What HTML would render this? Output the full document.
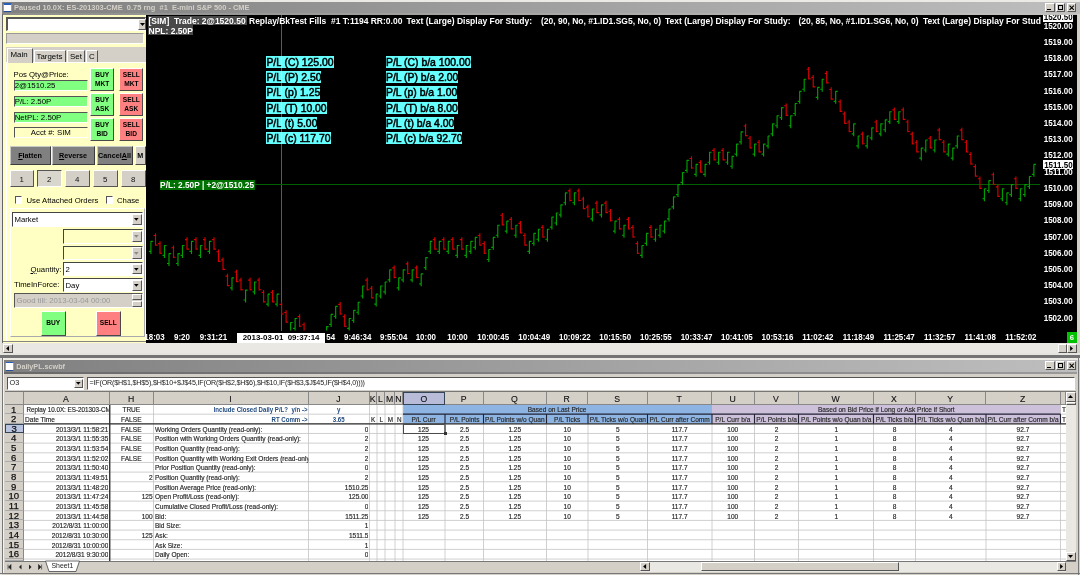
<!DOCTYPE html><html><head><meta charset="utf-8"><title>DailyPL</title><style>
*{box-sizing:border-box;margin:0;padding:0}
html,body{width:1080px;height:575px;overflow:hidden;background:#d4d0c8}
body{position:relative;will-change:transform;font-family:"Liberation Sans",sans-serif;font-size:7px;color:#000}
.a{position:absolute;white-space:nowrap;overflow:hidden}
.t{position:absolute;white-space:nowrap;line-height:1}
.tb{background:linear-gradient(to right,#808080,#bebebe)}
.ttl{color:#d4d0c8;font-weight:bold;font-size:7.45px}
.ylw{background:#ffffc4}
.btn{position:absolute;text-align:center;font-weight:bold;font-size:7.2px;line-height:7.6px;border-top:1px solid #fff;border-left:1px solid #fff;border-right:1.6px solid #4a4a4a;border-bottom:1.6px solid #4a4a4a}
.g{background:#80ff80}
.r{background:#ff8080}
.sunk{border-top:1.3px solid #555;border-left:1.3px solid #555;border-right:1px solid #fff;border-bottom:1px solid #fff}
.rais{border-top:1px solid #fff;border-left:1px solid #fff;border-right:1.3px solid #555;border-bottom:1.3px solid #555}
.cb{position:absolute;background:#d4d0c8}
.ct{position:absolute;color:#fff;font-weight:bold;font-size:8.5px;white-space:nowrap;line-height:1}
.cy{position:absolute;background:#6ff;color:#000;font-size:10.4px;line-height:13.2px;height:12.2px;overflow:hidden;white-space:nowrap;-webkit-text-stroke:0.5px #000}
.pl{position:absolute;color:#fff;font-weight:bold;font-size:8px;white-space:nowrap;line-height:1;right:7.4px;text-align:right;transform:scaleY(1.14)}
.tl{position:absolute;color:#fff;font-weight:bold;font-size:7.95px;white-space:nowrap;line-height:1;top:333.5px;transform:scaleY(1.14)}
.c{position:absolute;white-space:nowrap;overflow:hidden;font-size:7.05px;line-height:9.66px;height:9.66px;color:#222;-webkit-text-stroke:0.18px #333}
.hd{position:absolute;background:#d4d0c8;text-align:center;font-size:8.7px;line-height:15.4px;color:#111;-webkit-text-stroke:0.12px #111;border-right:1px solid #888;border-bottom:1px solid #888}
.hd span{position:absolute;left:50%;top:0;transform:translateX(-50%)}
.rh{position:absolute;background:#d4d0c8;text-align:center;font-size:9.6px;line-height:10px;color:#111;-webkit-text-stroke:0.25px #111;border-right:1px solid #888;border-bottom:1px solid #aaa;overflow:hidden}
.bl{color:#1f497d;font-weight:bold;font-size:6.55px;-webkit-text-stroke:0}
</style></head><body>
<div class="a " style="left:0px;top:0px;width:1080px;height:2px;background:#eceae4"></div>
<div class="a tb" style="left:0px;top:1.9px;width:1080px;height:11.1px;"></div>
<div class="a " style="left:2.5px;top:3px;width:9.5px;height:9px;background:#fff;border-top:2px solid #2a5fb8;border-bottom:1px solid #2a4f98;border-left:0.6px solid #8aa;border-right:0.6px solid #8aa"></div>
<div class="t ttl" style="left:14px;top:4.2px;white-space:pre">Paused 10.0X: ES-201303-CME  0.75 rng  #1  E-mini S&amp;P 500 - CME</div>
<div class="a rais" style="left:1045.2px;top:3px;width:9.4px;height:8.7px;background:#d4d0c8"></div>
<div class="a rais" style="left:1055.6px;top:3px;width:9.4px;height:8.7px;background:#d4d0c8"></div>
<div class="a rais" style="left:1067px;top:3px;width:9.4px;height:8.7px;background:#d4d0c8"></div>
<div class="a " style="left:1047.2px;top:8.8px;width:4.2px;height:1.3px;background:#000"></div>
<div class="a " style="left:1057.8px;top:4.6px;width:5.4px;height:5.4px;border:0.9px solid #000;border-top:1.6px solid #000"></div>
<svg class="a" style="left:1069.2px;top:4.5px;width:5.6px;height:5.6px" viewBox="0 0 6 6"><path d="M0.6 0.6L5.2 5.2M5.2 0.6L0.6 5.2" stroke="#000" stroke-width="1.2"/></svg>
<div class="a " style="left:0px;top:12.9px;width:1080px;height:2.2px;background:linear-gradient(to right,#8c8c8c,#c4c2be)"></div>
<div class="a " style="left:0px;top:2px;width:1.6px;height:354px;background:#e4e2dc"></div>
<div class="a " style="left:1.6px;top:14px;width:1.0px;height:329px;background:#666"></div>
<div class="a " style="left:1076.8px;top:14px;width:3.2px;height:342px;background:#d4d0c8"></div>
<div class="a ylw" style="left:2.6px;top:15.3px;width:143.4px;height:328.0px;"></div>
<div class="a " style="left:2.6px;top:340.6px;width:143.4px;height:1.2px;background:#858585"></div>
<div class="a sunk" style="left:5.5px;top:17px;width:140.5px;height:13.5px;background:#fff;border-left:2px solid #555;border-top:2px solid #555"></div>
<div class="a rais" style="left:137.5px;top:19px;width:8.5px;height:10.5px;background:#d4d0c8"></div>
<svg class="a" style="left:139.5px;top:22.5px;width:5px;height:3px" viewBox="0 0 5 3"><path d="M0 0H5L2.5 3Z" fill="#000"/></svg>
<div class="a " style="left:5.5px;top:33px;width:138.0px;height:10.5px;background:#d4d0c8;border-top:1px solid #999;border-left:1px solid #999;border-bottom:1px solid #fff;border-right:1px solid #fff"></div>
<div class="a " style="left:5.5px;top:47px;width:140.5px;height:15px;background:#d4d0c8"></div>
<div class="a " style="left:7px;top:47.5px;width:25.5px;height:15.5px;background:#d4d0c8;border-left:1px solid #fff;border-top:1px solid #fff;border-right:1.4px solid #555"></div>
<div class="t " style="left:10.5px;top:50.5px;font-size:7.9px">Main</div>
<div class="a " style="left:33.5px;top:49.5px;width:32.0px;height:12.0px;background:#d4d0c8;border-left:1px solid #fff;border-top:1px solid #fff;border-right:1.4px solid #555"></div>
<div class="t " style="left:36.5px;top:52.5px;font-size:7.9px">Targets</div>
<div class="a " style="left:66.5px;top:49.5px;width:18.0px;height:12.0px;background:#d4d0c8;border-left:1px solid #fff;border-top:1px solid #fff;border-right:1.4px solid #555"></div>
<div class="t " style="left:70px;top:52.5px;font-size:7.9px">Set</div>
<div class="a " style="left:85.5px;top:49.5px;width:12.5px;height:12.0px;background:#d4d0c8;border-left:1px solid #fff;border-top:1px solid #fff;border-right:1.4px solid #555"></div>
<div class="t " style="left:89px;top:52.5px;font-size:7.9px">C</div>
<div class="a " style="left:5.5px;top:61.5px;width:1.5px;height:279.1px;background:#fff"></div>
<div class="a " style="left:32.5px;top:61.5px;width:113.5px;height:1.0px;background:#fff"></div>
<div class="t " style="left:13.5px;top:71px;font-size:7.75px">Pos Qty@Price:</div>
<div class="a g sunk" style="left:13.7px;top:80px;width:74.3px;height:11px;font-size:7.85px;line-height:9.7px;padding-left:0;">2@1510.25</div>
<div class="a g sunk" style="left:13.7px;top:96px;width:74.3px;height:10.5px;font-size:7.85px;line-height:9.2px;padding-left:0;">P/L: 2.50P</div>
<div class="a g sunk" style="left:13.7px;top:111.5px;width:74.3px;height:11.0px;font-size:7.85px;line-height:9.7px;padding-left:0;">NetPL: 2.50P</div>
<div class="a ylw sunk" style="left:13.7px;top:127px;width:74.3px;height:11px;font-size:7.85px;line-height:9.7px;text-align:center;">Acct #: SIM</div>
<div class="btn g" style="left:90.2px;top:67.9px;width:24px;height:23.3px;padding-top:2.6px;font-size:6.6px;line-height:8.9px">BUY<br>MKT</div>
<div class="btn r" style="left:119.3px;top:67.9px;width:24px;height:23.3px;padding-top:2.6px;font-size:6.6px;line-height:8.9px">SELL<br>MKT</div>
<div class="btn g" style="left:90.2px;top:92.9px;width:24px;height:23.3px;padding-top:2.6px;font-size:6.6px;line-height:8.9px">BUY<br>ASK</div>
<div class="btn r" style="left:119.3px;top:92.9px;width:24px;height:23.3px;padding-top:2.6px;font-size:6.6px;line-height:8.9px">SELL<br>ASK</div>
<div class="btn g" style="left:90.2px;top:117.9px;width:24px;height:23.3px;padding-top:2.6px;font-size:6.6px;line-height:8.9px">BUY<br>BID</div>
<div class="btn r" style="left:119.3px;top:117.9px;width:24px;height:23.3px;padding-top:2.6px;font-size:6.6px;line-height:8.9px">SELL<br>BID</div>
<div class="btn" style="left:9.5px;top:146px;width:41.0px;height:18.5px;background:#808080;line-height:18px;font-size:7.2px;border-top:0.8px solid #c8c8c8;border-left:0.8px solid #c8c8c8;border-right:1.6px solid #3c3c3c;border-bottom:1.6px solid #3c3c3c"><u>F</u>latten</div>
<div class="btn" style="left:51.5px;top:146px;width:43.0px;height:18.5px;background:#808080;line-height:18px;font-size:7.2px;border-top:0.8px solid #c8c8c8;border-left:0.8px solid #c8c8c8;border-right:1.6px solid #3c3c3c;border-bottom:1.6px solid #3c3c3c"><u>R</u>everse</div>
<div class="btn" style="left:96.5px;top:146px;width:36.0px;height:18.5px;background:#808080;line-height:18px;font-size:7.2px;border-top:0.8px solid #c8c8c8;border-left:0.8px solid #c8c8c8;border-right:1.6px solid #3c3c3c;border-bottom:1.6px solid #3c3c3c">Cancel<u>A</u>ll</div>
<div class="btn" style="left:134.5px;top:146px;width:11.5px;height:18.5px;background:#d4d0c8;line-height:17.6px;font-size:7.2px">M</div>
<div class="a rais" style="left:9.5px;top:170px;width:24.5px;height:16.5px;background:#d4d0c8;text-align:center;line-height:17.2px;font-size:7.9px;color:#111">1</div>
<div class="a" style="left:37px;top:170px;width:24.5px;height:16.5px;background:#d9d6ce;border:1.3px solid #555;border-right:1px solid #fff;border-bottom:1px solid #fff;text-align:center;line-height:17.4px;font-size:7.9px;color:#111">2</div>
<div class="a rais" style="left:65px;top:170px;width:24.5px;height:16.5px;background:#d4d0c8;text-align:center;line-height:17.2px;font-size:7.9px;color:#111">4</div>
<div class="a rais" style="left:93px;top:170px;width:24.5px;height:16.5px;background:#d4d0c8;text-align:center;line-height:17.2px;font-size:7.9px;color:#111">5</div>
<div class="a rais" style="left:121px;top:170px;width:24.5px;height:16.5px;background:#d4d0c8;text-align:center;line-height:17.2px;font-size:7.9px;color:#111">8</div>
<div class="a sunk" style="left:15px;top:196px;width:7.3px;height:7.8px;background:#fff"></div>
<div class="t " style="left:26.5px;top:197px;font-size:7.75px">Use Attached Orders</div>
<div class="a sunk" style="left:106px;top:196px;width:7.3px;height:7.8px;background:#fff"></div>
<div class="t " style="left:117px;top:197px;font-size:7.75px">Chase</div>
<div class="a " style="left:10px;top:208px;width:135px;height:128.5px;border:1px solid #fff;border-right:1px solid #aaa;border-bottom:1px solid #aaa"></div>
<div class="a sunk" style="left:12px;top:212px;width:130.5px;height:14.5px;background:#fff;font-size:7.75px;line-height:14.3px;padding-left:1.5px;border-left:1.6px solid #444;border-top:1.6px solid #444">Market</div>
<div class="a rais" style="left:131.5px;top:213.6px;width:10.0px;height:11.9px;background:#d4d0c8"></div>
<svg class="a" style="left:134.2px;top:218.25px;width:4.6px;height:2.8px" viewBox="0 0 5 3"><path d="M0 0H5L2.5 3Z" fill="#000"/></svg>
<div class="a sunk" style="left:63px;top:229px;width:79.5px;height:14.5px;background:#ffffc4;font-size:7.75px;line-height:14.3px;padding-left:1.5px;border-left:1.6px solid #444;border-top:1.6px solid #444"></div>
<div class="a rais" style="left:131.5px;top:230.6px;width:10.0px;height:11.9px;background:#d4d0c8"></div>
<svg class="a" style="left:134.2px;top:235.25px;width:4.6px;height:2.8px" viewBox="0 0 5 3"><path d="M0 0H5L2.5 3Z" fill="#888"/></svg>
<div class="a sunk" style="left:63px;top:245.5px;width:79.5px;height:14.5px;background:#ffffc4;font-size:7.75px;line-height:14.3px;padding-left:1.5px;border-left:1.6px solid #444;border-top:1.6px solid #444"></div>
<div class="a rais" style="left:131.5px;top:247.1px;width:10.0px;height:11.9px;background:#d4d0c8"></div>
<svg class="a" style="left:134.2px;top:251.75px;width:4.6px;height:2.8px" viewBox="0 0 5 3"><path d="M0 0H5L2.5 3Z" fill="#888"/></svg>
<div class="a sunk" style="left:63px;top:262px;width:79.5px;height:13.5px;background:#fff;font-size:7.75px;line-height:13.3px;padding-left:1.5px;border-left:1.6px solid #444;border-top:1.6px solid #444">2</div>
<div class="a rais" style="left:131.5px;top:263.6px;width:10.0px;height:10.9px;background:#d4d0c8"></div>
<svg class="a" style="left:134.2px;top:267.75px;width:4.6px;height:2.8px" viewBox="0 0 5 3"><path d="M0 0H5L2.5 3Z" fill="#000"/></svg>
<div class="a sunk" style="left:63px;top:278px;width:79.5px;height:14px;background:#fff;font-size:7.75px;line-height:13.8px;padding-left:1.5px;border-left:1.6px solid #444;border-top:1.6px solid #444">Day</div>
<div class="a rais" style="left:131.5px;top:279.6px;width:10.0px;height:11.4px;background:#d4d0c8"></div>
<svg class="a" style="left:134.2px;top:284.0px;width:4.6px;height:2.8px" viewBox="0 0 5 3"><path d="M0 0H5L2.5 3Z" fill="#000"/></svg>
<div class="t" style="left:30.5px;top:265.5px;font-size:7.75px"><u>Q</u>uantity:</div>
<div class="t " style="left:14px;top:281px;font-size:7.75px">TimeInForce:</div>
<div class="a sunk" style="left:14px;top:292.5px;width:128.5px;height:15.0px;background:#d4d0c8;color:#999;font-size:7.75px;line-height:13px;padding-left:1.5px;border-left:1.6px solid #555;border-top:1.6px solid #555">Good till: 2013-03-04 00:00</div>
<div class="a rais" style="left:131.5px;top:294px;width:10.0px;height:6.3px;background:#d4d0c8"></div>
<div class="a rais" style="left:131.5px;top:300.5px;width:10.0px;height:6.3px;background:#d4d0c8"></div>
<div class="btn g" style="left:41px;top:311px;width:24.5px;height:24.5px;line-height:22.4px;font-size:6.6px">BUY</div>
<div class="btn r" style="left:96px;top:311px;width:24.5px;height:24.5px;line-height:22.4px;font-size:6.6px">SELL</div>
<div class="a " style="left:2.6px;top:343.3px;width:1074.4px;height:9.7px;background:#e9e8e2"></div>
<div class="a rais" style="left:2.8px;top:343.6px;width:9.8px;height:9.2px;background:#d4d0c8"></div>
<svg class="a" style="left:6px;top:345.6px;width:3.2px;height:5px" viewBox="0 0 3 5"><path d="M3 0V5L0 2.5Z" fill="#000"/></svg>
<div class="a rais" style="left:1067px;top:343.6px;width:9.6px;height:9.2px;background:#d4d0c8"></div>
<svg class="a" style="left:1070px;top:345.6px;width:3.2px;height:5px" viewBox="0 0 3 5"><path d="M0 0V5L3 2.5Z" fill="#000"/></svg>
<div class="a rais" style="left:1057.5px;top:343.6px;width:9.5px;height:9.2px;background:#d4d0c8"></div>
<div class="a " style="left:0px;top:352.6px;width:1080px;height:2.6px;background:#e6e4de"></div>
<div class="a " style="left:0px;top:355.2px;width:1080px;height:2.6px;background:#747474"></div>
<div class="a " style="left:0px;top:357.8px;width:1080px;height:2.2px;background:#eceae4"></div>
<div class="a " style="left:146px;top:15px;width:930.8px;height:328.3px;background:#000"></div>
<div class="a " style="left:281px;top:15px;width:1.3px;height:316px;background:#5a5a5a"></div>
<div class="a " style="left:254px;top:183.7px;width:786px;height:1.2px;background:#006000"></div>
<svg class="a" style="left:0;top:0;width:1080px;height:345px" viewBox="0 0 1080 345">
<path d="M150.9 241.3V253.9M150.6 241.4h2.3M151.2 251.4h-2.3M164.5 245.4V257.9M164.2 245.5h2.3M164.8 255.4h-2.3M169.0 253.5V266.0M168.7 253.6h2.3M169.3 263.5h-2.3M178.0 253.5V266.0M177.7 253.6h2.3M178.3 263.5h-2.3M182.5 245.4V257.9M182.2 245.5h2.3M182.8 255.4h-2.3M191.5 241.3V253.9M191.2 241.4h2.3M191.8 251.4h-2.3M200.5 245.4V257.9M200.2 245.5h2.3M200.8 255.4h-2.3M209.5 241.3V253.9M209.2 241.4h2.3M209.8 251.4h-2.3M232.0 277.8V290.4M231.7 277.9h2.3M232.3 287.9h-2.3M245.6 290.0V302.5M245.3 290.1h2.3M245.9 300.0h-2.3M254.6 281.9V294.4M254.3 282.0h2.3M254.9 291.9h-2.3M268.1 294.0V306.6M267.8 294.1h2.3M268.4 304.1h-2.3M277.1 294.0V306.6M276.8 294.1h2.3M277.4 304.1h-2.3M290.6 322.4V330.5M290.3 322.5h2.3M295.1 318.4V330.4M294.8 318.5h2.3M295.4 328.4h-2.3M326.6 326.5V330.5M326.3 326.6h2.3M331.1 314.3V326.9M330.8 314.4h2.3M331.4 324.4h-2.3M335.7 306.2V318.8M335.4 306.3h2.3M336.0 316.3h-2.3M349.2 318.4V330.4M348.9 318.5h2.3M349.5 328.4h-2.3M353.7 310.2V322.8M353.4 310.3h2.3M354.0 320.3h-2.3M358.2 302.1V314.7M357.9 302.2h2.3M358.5 312.2h-2.3M362.7 285.9V298.5M362.4 286.0h2.3M363.0 296.0h-2.3M376.2 294.0V306.6M375.9 294.1h2.3M376.5 304.1h-2.3M380.7 285.9V298.5M380.4 286.0h2.3M381.0 296.0h-2.3M385.2 281.9V294.4M384.9 282.0h2.3M385.5 291.9h-2.3M389.7 269.7V282.3M389.4 269.8h2.3M390.0 279.8h-2.3M398.7 277.8V290.4M398.4 277.9h2.3M399.0 287.9h-2.3M403.2 269.7V282.3M402.9 269.8h2.3M403.5 279.8h-2.3M412.2 269.7V282.3M411.9 269.8h2.3M412.5 279.8h-2.3M421.2 273.8V286.3M420.9 273.9h2.3M421.6 283.8h-2.3M425.8 257.5V270.1M425.5 257.6h2.3M426.1 267.6h-2.3M430.3 241.3V253.9M430.0 241.4h2.3M430.6 251.4h-2.3M439.3 241.3V253.9M439.0 241.4h2.3M439.6 251.4h-2.3M448.3 241.3V253.9M448.0 241.4h2.3M448.6 251.4h-2.3M457.3 245.4V257.9M457.0 245.5h2.3M457.6 255.4h-2.3M466.3 245.4V257.9M466.0 245.5h2.3M466.6 255.4h-2.3M470.8 241.3V253.9M470.5 241.4h2.3M471.1 251.4h-2.3M475.3 237.3V249.8M475.0 237.4h2.3M475.6 247.3h-2.3M488.8 249.4V262.0M488.5 249.5h2.3M489.1 259.5h-2.3M493.3 237.3V249.8M493.0 237.4h2.3M493.6 247.3h-2.3M497.8 225.1V237.7M497.5 225.2h2.3M498.1 235.2h-2.3M506.8 221.0V233.6M506.5 221.1h2.3M507.1 231.1h-2.3M515.9 225.1V237.7M515.6 225.2h2.3M516.2 235.2h-2.3M529.4 241.3V253.9M529.1 241.4h2.3M529.7 251.4h-2.3M533.9 233.2V245.8M533.6 233.3h2.3M534.2 243.3h-2.3M538.4 229.2V241.7M538.1 229.2h2.3M538.7 239.2h-2.3M547.4 229.2V241.7M547.1 229.2h2.3M547.7 239.2h-2.3M551.9 217.0V229.6M551.6 217.1h2.3M552.2 227.1h-2.3M556.4 212.9V225.5M556.1 213.0h2.3M556.7 223.0h-2.3M560.9 204.8V217.4M560.6 204.9h2.3M561.2 214.9h-2.3M565.4 192.7V205.2M565.1 192.8h2.3M565.7 202.7h-2.3M574.4 192.7V205.2M574.1 192.8h2.3M574.7 202.7h-2.3M592.4 208.9V221.4M592.1 209.0h2.3M592.7 218.9h-2.3M601.5 204.8V217.4M601.2 204.9h2.3M601.8 214.9h-2.3M615.0 221.0V233.6M614.7 221.1h2.3M615.3 231.1h-2.3M624.0 225.1V237.7M623.7 225.2h2.3M624.3 235.2h-2.3M642.0 245.4V257.9M641.7 245.5h2.3M642.3 255.4h-2.3M646.5 233.2V245.8M646.2 233.3h2.3M646.8 243.3h-2.3M655.5 229.2V241.7M655.2 229.2h2.3M655.8 239.2h-2.3M660.0 225.1V237.7M659.7 225.2h2.3M660.3 235.2h-2.3M664.5 221.0V233.6M664.2 221.1h2.3M664.8 231.1h-2.3M669.0 208.9V221.4M668.7 209.0h2.3M669.3 218.9h-2.3M673.5 196.7V209.3M673.2 196.8h2.3M673.8 206.8h-2.3M678.0 184.5V197.1M677.7 184.6h2.3M678.3 194.6h-2.3M682.5 172.4V184.9M682.2 172.5h2.3M682.8 182.4h-2.3M687.0 160.2V172.8M686.7 160.3h2.3M687.3 170.3h-2.3M696.1 164.3V176.8M695.8 164.4h2.3M696.4 174.3h-2.3M705.1 164.3V176.8M704.8 164.4h2.3M705.4 174.3h-2.3M709.6 152.1V164.7M709.3 152.2h2.3M709.9 162.2h-2.3M718.6 152.1V164.7M718.3 152.2h2.3M718.9 162.2h-2.3M727.6 152.1V164.7M727.3 152.2h2.3M727.9 162.2h-2.3M732.1 156.2V168.7M731.8 156.3h2.3M732.4 166.2h-2.3M736.6 144.0V156.6M736.3 144.1h2.3M736.9 154.1h-2.3M741.1 131.8V144.4M740.8 131.9h2.3M741.4 141.9h-2.3M754.6 144.0V156.6M754.3 144.1h2.3M754.9 154.1h-2.3M763.6 144.0V156.6M763.3 144.1h2.3M763.9 154.1h-2.3M768.1 135.9V148.4M767.8 136.0h2.3M768.4 145.9h-2.3M772.6 123.7V136.3M772.3 123.8h2.3M772.9 133.8h-2.3M777.1 115.6V128.2M776.8 115.7h2.3M777.4 125.7h-2.3M781.6 107.5V120.1M781.3 107.6h2.3M781.9 117.6h-2.3M790.7 115.6V128.2M790.4 115.7h2.3M791.0 125.7h-2.3M795.2 103.4V116.0M794.9 103.5h2.3M795.5 113.5h-2.3M799.7 91.3V103.8M799.4 91.4h2.3M800.0 101.3h-2.3M804.2 79.1V91.7M803.9 79.2h2.3M804.5 89.2h-2.3M817.7 87.2V99.8M817.4 87.3h2.3M818.0 97.3h-2.3M822.2 79.1V91.7M821.9 79.2h2.3M822.5 89.2h-2.3M835.7 91.3V103.8M835.4 91.4h2.3M836.0 101.3h-2.3M853.7 123.7V136.3M853.4 123.8h2.3M854.0 133.8h-2.3M858.2 135.9V148.4M857.9 136.0h2.3M858.5 145.9h-2.3M867.2 135.9V148.4M866.9 136.0h2.3M867.5 145.9h-2.3M871.8 127.8V140.3M871.5 127.9h2.3M872.0 137.8h-2.3M880.8 123.7V136.3M880.5 123.8h2.3M881.1 133.8h-2.3M885.3 119.7V132.2M885.0 119.8h2.3M885.6 129.7h-2.3M889.8 111.6V124.1M889.5 111.7h2.3M890.1 121.6h-2.3M898.8 111.6V124.1M898.5 111.7h2.3M899.1 121.6h-2.3M921.3 148.0V160.6M921.0 148.1h2.3M921.6 158.1h-2.3M925.8 139.9V152.5M925.5 140.0h2.3M926.1 150.0h-2.3M934.8 139.9V152.5M934.5 140.0h2.3M935.1 150.0h-2.3M948.3 144.0V156.6M948.0 144.1h2.3M948.6 154.1h-2.3M952.8 148.0V160.6M952.5 148.1h2.3M953.1 158.1h-2.3M957.3 135.9V148.4M957.0 136.0h2.3M957.6 145.9h-2.3M984.4 188.6V201.2M984.1 188.7h2.3M984.7 198.7h-2.3M988.9 180.5V193.1M988.6 180.6h2.3M989.2 190.6h-2.3M1002.4 188.6V201.2M1002.1 188.7h2.3M1002.7 198.7h-2.3M1006.9 192.7V205.2M1006.6 192.8h2.3M1007.2 202.7h-2.3M1011.4 184.5V197.1M1011.1 184.6h2.3M1011.7 194.6h-2.3M1020.4 188.6V201.2M1020.1 188.7h2.3M1020.7 198.7h-2.3M1024.9 184.5V197.1M1024.6 184.6h2.3M1025.2 194.6h-2.3M1029.4 176.4V189.0M1029.1 176.5h2.3M1029.7 186.5h-2.3M1033.9 164.3V176.8M1033.6 164.4h2.3M1034.2 174.3h-2.3" stroke="#00a000" stroke-width="1.15" fill="none"/>
<path d="M155.5 233.2V245.8M155.8 235.5h-2.3M155.2 245.1h2.3M160.0 241.3V253.9M160.3 243.6h-2.3M159.7 253.2h2.3M173.5 245.4V257.9M173.8 247.7h-2.3M173.2 257.2h2.3M187.0 237.3V249.8M187.3 239.6h-2.3M186.7 249.1h2.3M196.0 237.3V249.8M196.3 239.6h-2.3M195.7 249.1h2.3M205.0 237.3V249.8M205.3 239.6h-2.3M204.7 249.1h2.3M214.0 237.3V249.8M214.3 239.6h-2.3M213.7 249.1h2.3M218.5 249.4V262.0M218.8 251.7h-2.3M218.2 261.3h2.3M223.0 257.5V270.1M223.3 259.8h-2.3M222.7 269.4h2.3M227.5 273.8V286.3M227.8 276.1h-2.3M227.2 285.6h2.3M236.5 269.7V282.3M236.8 272.0h-2.3M236.2 281.6h2.3M241.0 277.8V290.4M241.3 280.1h-2.3M240.7 289.7h2.3M250.1 277.8V290.4M250.4 280.1h-2.3M249.8 289.7h2.3M259.1 277.8V290.4M259.4 280.1h-2.3M258.8 289.7h2.3M263.6 290.0V302.5M263.9 292.3h-2.3M263.3 301.8h2.3M272.6 290.0V302.5M272.9 292.3h-2.3M272.3 301.8h2.3M281.6 302.1V314.7M281.9 304.4h-2.3M281.3 314.0h2.3M286.1 310.2V322.8M286.4 312.5h-2.3M285.8 322.1h2.3M299.6 314.3V326.9M299.9 316.6h-2.3M299.3 326.2h2.3M304.1 322.4V330.5M304.4 324.7h-2.3M340.2 302.1V314.7M340.5 304.4h-2.3M339.9 314.0h2.3M344.7 314.3V326.9M345.0 316.6h-2.3M344.4 326.2h2.3M367.2 277.8V290.4M367.5 280.1h-2.3M366.9 289.7h2.3M371.7 285.9V298.5M372.0 288.2h-2.3M371.4 297.8h2.3M394.2 265.6V278.2M394.5 267.9h-2.3M393.9 277.5h2.3M407.7 261.6V274.2M408.0 263.9h-2.3M407.4 273.5h2.3M416.7 265.6V278.2M417.0 267.9h-2.3M416.4 277.5h2.3M434.8 237.3V249.8M435.1 239.6h-2.3M434.5 249.1h2.3M443.8 237.3V249.8M444.1 239.6h-2.3M443.5 249.1h2.3M452.8 237.3V249.8M453.1 239.6h-2.3M452.5 249.1h2.3M461.8 237.3V249.8M462.1 239.6h-2.3M461.5 249.1h2.3M479.8 233.2V245.8M480.1 235.5h-2.3M479.5 245.1h2.3M484.3 241.3V253.9M484.6 243.6h-2.3M484.0 253.2h2.3M502.3 212.9V225.5M502.6 215.2h-2.3M502.0 224.8h2.3M511.3 217.0V229.6M511.6 219.3h-2.3M511.0 228.9h2.3M520.4 221.0V233.6M520.7 223.3h-2.3M520.1 232.9h2.3M524.9 233.2V245.8M525.2 235.5h-2.3M524.6 245.1h2.3M542.9 225.1V237.7M543.2 227.4h-2.3M542.6 237.0h2.3M569.9 188.6V201.2M570.2 190.9h-2.3M569.6 200.5h2.3M578.9 188.6V201.2M579.2 190.9h-2.3M578.6 200.5h2.3M583.4 196.7V209.3M583.7 199.0h-2.3M583.1 208.6h2.3M587.9 204.8V217.4M588.2 207.1h-2.3M587.6 216.7h2.3M596.9 200.8V213.3M597.2 203.1h-2.3M596.6 212.6h2.3M606.0 200.8V213.3M606.3 203.1h-2.3M605.7 212.6h2.3M610.5 208.9V221.4M610.8 211.2h-2.3M610.2 220.7h2.3M619.5 217.0V229.6M619.8 219.3h-2.3M619.2 228.9h2.3M628.5 217.0V229.6M628.8 219.3h-2.3M628.2 228.9h2.3M633.0 225.1V237.7M633.3 227.4h-2.3M632.7 237.0h2.3M637.5 241.3V253.9M637.8 243.6h-2.3M637.2 253.2h2.3M651.0 225.1V237.7M651.3 227.4h-2.3M650.7 237.0h2.3M691.5 156.2V168.7M691.8 158.5h-2.3M691.2 168.0h2.3M700.6 160.2V172.8M700.9 162.5h-2.3M700.3 172.1h2.3M714.1 148.0V160.6M714.4 150.3h-2.3M713.8 159.9h2.3M723.1 148.0V160.6M723.4 150.3h-2.3M722.8 159.9h2.3M745.6 123.7V136.3M745.9 126.0h-2.3M745.3 135.6h2.3M750.1 135.9V148.4M750.4 138.2h-2.3M749.8 147.8h2.3M759.1 139.9V152.5M759.4 142.2h-2.3M758.8 151.8h2.3M786.2 103.4V116.0M786.5 105.7h-2.3M785.9 115.3h2.3M808.7 66.9V79.5M809.0 69.2h-2.3M808.4 78.8h2.3M813.2 75.1V87.6M813.5 77.4h-2.3M812.9 86.9h2.3M826.7 71.0V83.6M827.0 73.3h-2.3M826.4 82.9h2.3M831.2 87.2V99.8M831.5 89.5h-2.3M830.9 99.1h2.3M840.2 99.4V112.0M840.5 101.7h-2.3M839.9 111.3h2.3M844.7 111.6V124.1M845.0 113.9h-2.3M844.4 123.4h2.3M849.2 119.7V132.2M849.5 122.0h-2.3M848.9 131.5h2.3M862.7 131.8V144.4M863.0 134.1h-2.3M862.4 143.7h2.3M876.3 119.7V132.2M876.6 122.0h-2.3M876.0 131.5h2.3M894.3 107.5V120.1M894.6 109.8h-2.3M894.0 119.4h2.3M903.3 107.5V120.1M903.6 109.8h-2.3M903.0 119.4h2.3M907.8 119.7V132.2M908.1 122.0h-2.3M907.5 131.5h2.3M912.3 131.8V144.4M912.6 134.1h-2.3M912.0 143.7h2.3M916.8 139.9V152.5M917.1 142.2h-2.3M916.5 151.8h2.3M930.3 135.9V148.4M930.6 138.2h-2.3M930.0 147.8h2.3M939.3 127.8V140.3M939.6 130.1h-2.3M939.0 139.6h2.3M943.8 139.9V152.5M944.1 142.2h-2.3M943.5 151.8h2.3M961.8 127.8V140.3M962.1 130.1h-2.3M961.5 139.6h2.3M966.4 139.9V152.5M966.7 142.2h-2.3M966.1 151.8h2.3M970.9 152.1V164.7M971.2 154.4h-2.3M970.6 164.0h2.3M975.4 164.3V176.8M975.7 166.6h-2.3M975.1 176.1h2.3M979.9 176.4V189.0M980.2 178.7h-2.3M979.6 188.3h2.3M993.4 172.4V184.9M993.7 174.7h-2.3M993.1 184.2h2.3M997.9 184.5V197.1M998.2 186.8h-2.3M997.6 196.4h2.3M1015.9 176.4V189.0M1016.2 178.7h-2.3M1015.6 188.3h2.3" stroke="#d80000" stroke-width="1.15" fill="none"/>
</svg>
<div class="a " style="left:147.5px;top:15.5px;width:99.0px;height:9.5px;background:#484848"></div>
<div class="a " style="left:147.5px;top:25px;width:45.0px;height:10px;background:#484848"></div>
<div class="ct" style="left:148.5px;top:17px;white-space:pre">[SIM]  Trade: 2@1520.50</div>
<div class="ct" style="left:249px;top:17px;white-space:pre">Replay/BkTest Fills  #1 T:1194 RR:0.00</div>
<div class="ct" style="left:406.5px;top:17px;white-space:pre">Text (Large) Display For Study:</div>
<div class="ct" style="left:541px;top:17px;white-space:pre">(20, 90, No, #1.ID1.SG5, No, 0)</div>
<div class="ct" style="left:665px;top:17px;white-space:pre">Text (Large) Display For Study:</div>
<div class="ct" style="left:798.5px;top:17px;white-space:pre">(20, 85, No, #1.ID1.SG6, No, 0)</div>
<div class="a" style="left:923px;top:15px;width:117.5px;height:11px"><div class="ct" style="left:0;top:2px">Text (Large) Display For Study:</div></div>
<div class="ct" style="left:148.5px;top:27px;white-space:pre">NPL: 2.50P</div>
<div class="cy" style="left:266.4px;top:56.0px">P/L (C) 125.00</div>
<div class="cy" style="left:386px;top:56.0px">P/L (C) b/a 100.00</div>
<div class="cy" style="left:266.4px;top:71.2px">P/L (P) 2.50</div>
<div class="cy" style="left:386px;top:71.2px">P/L (P) b/a 2.00</div>
<div class="cy" style="left:266.4px;top:86.4px">P/L (p) 1.25</div>
<div class="cy" style="left:386px;top:86.4px">P/L (p) b/a 1.00</div>
<div class="cy" style="left:266.4px;top:101.6px">P/L (T) 10.00</div>
<div class="cy" style="left:386px;top:101.6px">P/L (T) b/a 8.00</div>
<div class="cy" style="left:266.4px;top:116.8px">P/L (t) 5.00</div>
<div class="cy" style="left:386px;top:116.8px">P/L (t) b/a 4.00</div>
<div class="cy" style="left:266.4px;top:132.0px">P/L (c) 117.70</div>
<div class="cy" style="left:386px;top:132.0px">P/L (c) b/a 92.70</div>
<div class="a" style="left:159.5px;top:179.6px;width:95px;height:10px;background:#007000;color:#fff;font-weight:bold;font-size:8.3px;line-height:10px;padding:0 0.6px">P/L: 2.50P | +2@1510.25</div>
<div class="pl" style="top:314.6px">1502.00</div>
<div class="pl" style="top:298.3px">1503.00</div>
<div class="pl" style="top:282.1px">1504.00</div>
<div class="pl" style="top:265.9px">1505.00</div>
<div class="pl" style="top:249.7px">1506.00</div>
<div class="pl" style="top:233.5px">1507.00</div>
<div class="pl" style="top:217.2px">1508.00</div>
<div class="pl" style="top:201.0px">1509.00</div>
<div class="pl" style="top:184.8px">1510.00</div>
<div class="pl" style="top:168.6px">1511.00</div>
<div class="pl" style="top:152.4px">1512.00</div>
<div class="pl" style="top:136.1px">1513.00</div>
<div class="pl" style="top:119.9px">1514.00</div>
<div class="pl" style="top:103.7px">1515.00</div>
<div class="pl" style="top:87.5px">1516.00</div>
<div class="pl" style="top:71.3px">1517.00</div>
<div class="pl" style="top:55.0px">1518.00</div>
<div class="pl" style="top:38.8px">1519.00</div>
<div class="pl" style="top:22.6px">1520.00</div>
<div class="a" style="left:1043px;top:15px;width:29.8px;height:6.8px;background:#fff"><div class="pl" style="top:-1px;right:0.2px;color:#000">1520.50</div></div>
<div class="a" style="left:1043px;top:159.6px;width:29.6px;height:9.1px;background:#fff"></div><div class="pl" style="top:161.5px;color:#000">1511.50</div>
<div class="a " style="left:1067px;top:331.5px;width:9.8px;height:11.8px;background:#00c000;color:#fff;font-weight:bold;font-size:7.7px;line-height:11.5px;text-align:center">6</div>
<div class="a" style="left:146px;top:331px;width:20px;height:12.3px"><div class="tl" style="left:-1.7px;top:2.5px">18:03</div></div>
<div class="tl" style="left:174px">9:20</div>
<div class="tl" style="left:199.7px">9:31:21</div>
<div class="tl" style="left:326.3px">54</div>
<div class="tl" style="left:344px">9:46:34</div>
<div class="tl" style="left:380px">9:55:04</div>
<div class="tl" style="left:415.7px">10:00</div>
<div class="tl" style="left:447.3px">10:00</div>
<div class="tl" style="left:477.3px">10:00:45</div>
<div class="tl" style="left:518.3px">10:04:49</div>
<div class="tl" style="left:559px">10:09:22</div>
<div class="tl" style="left:599.3px">10:15:50</div>
<div class="tl" style="left:640px">10:25:55</div>
<div class="tl" style="left:680.7px">10:33:47</div>
<div class="tl" style="left:721px">10:41:05</div>
<div class="tl" style="left:761.6px">10:53:16</div>
<div class="tl" style="left:802.2px">11:02:42</div>
<div class="tl" style="left:842.8px">11:18:49</div>
<div class="tl" style="left:883.4px">11:25:47</div>
<div class="tl" style="left:924px">11:32:57</div>
<div class="tl" style="left:964.6px">11:41:08</div>
<div class="tl" style="left:1005.2px">11:52:02</div>
<div class="a" style="left:236.7px;top:332.5px;width:88.8px;height:10px;background:#fff;color:#000;font-weight:bold;font-size:7.95px;line-height:10px;text-align:center;white-space:pre">2013-03-01  09:37:14</div>
<div class="a " style="left:281px;top:56.0px;width:1.3px;height:12.2px;background:rgba(190,255,255,0.75)"></div>
<div class="a " style="left:281px;top:71.2px;width:1.3px;height:12.2px;background:rgba(190,255,255,0.75)"></div>
<div class="a " style="left:281px;top:86.4px;width:1.3px;height:12.2px;background:rgba(190,255,255,0.75)"></div>
<div class="a " style="left:281px;top:101.6px;width:1.3px;height:12.2px;background:rgba(190,255,255,0.75)"></div>
<div class="a " style="left:281px;top:116.8px;width:1.3px;height:12.2px;background:rgba(190,255,255,0.75)"></div>
<div class="a " style="left:281px;top:132.0px;width:1.3px;height:12.2px;background:rgba(190,255,255,0.75)"></div>
<div class="a " style="left:0px;top:360px;width:1080px;height:215px;background:#d4d0c8"></div>
<div class="a " style="left:0px;top:357.8px;width:1.6px;height:217.2px;background:#e4e2dc"></div>
<div class="a " style="left:1.6px;top:358px;width:1.2px;height:215px;background:#777"></div>
<div class="a " style="left:2.8px;top:358px;width:1.0px;height:215px;background:#f4f3ee"></div>
<div class="a tb" style="left:3.6px;top:360.2px;width:1073.4px;height:11.8px;"></div>
<div class="a " style="left:3.6px;top:372px;width:1073.4px;height:1.5px;background:linear-gradient(to right,#686868,#9a9a9a)"></div>
<div class="a " style="left:4.5px;top:361.8px;width:9.5px;height:9.0px;background:#fff;border-top:1.8px solid #2a5fb8;border-bottom:1px solid #2a4f98;border-left:0.6px solid #8aa;border-right:0.6px solid #8aa"></div>
<div class="t ttl" style="left:16.2px;top:362.8px;font-size:7.2px">DailyPL.scwbf</div>
<div class="a rais" style="left:1045.2px;top:361.3px;width:9.4px;height:8.7px;background:#d4d0c8"></div>
<div class="a rais" style="left:1055.6px;top:361.3px;width:9.4px;height:8.7px;background:#d4d0c8"></div>
<div class="a rais" style="left:1067px;top:361.3px;width:9.4px;height:8.7px;background:#d4d0c8"></div>
<div class="a " style="left:1047.2px;top:367.1px;width:4.2px;height:1.3px;background:#000"></div>
<div class="a " style="left:1057.8px;top:362.90000000000003px;width:5.4px;height:5.4px;border:0.9px solid #000;border-top:1.6px solid #000"></div>
<svg class="a" style="left:1069.2px;top:362.8px;width:5.6px;height:5.6px" viewBox="0 0 6 6"><path d="M0.6 0.6L5.2 5.2M5.2 0.6L0.6 5.2" stroke="#000" stroke-width="1.2"/></svg>
<div class="a sunk" style="left:7px;top:377px;width:77px;height:12.5px;background:#fff;font-size:7.3px;line-height:9.6px;padding-left:1.5px;border-left:1.6px solid #555;border-top:1.6px solid #555;color:#222">O3</div>
<div class="a rais" style="left:73.5px;top:378.6px;width:9.5px;height:9.9px;background:#d4d0c8"></div>
<svg class="a" style="left:76px;top:382.3px;width:4.6px;height:2.8px" viewBox="0 0 5 3"><path d="M0 0H5L2.5 3Z" fill="#000"/></svg>
<div class="a sunk" style="left:87px;top:376.5px;width:988px;height:13.0px;background:#fff;font-size:7.15px;line-height:10.4px;padding-left:1.5px;border-left:1.6px solid #555;border-top:1.6px solid #555;color:#222;letter-spacing:-0.17px">=IF(OR($H$1,$H$5),$H$10+$J$45,IF(OR($H$2,$H$6),$H$10,IF($H$3,$J$45,IF($H$4,0))))</div>
<div class="a " style="left:5px;top:392px;width:1061px;height:169px;background:#fff"></div>
<div class="a " style="left:403px;top:404.5px;width:309px;height:19.32px;background:#8db4e2"></div>
<div class="a " style="left:712px;top:404.5px;width:348.5px;height:19.32px;background:#ccc0da"></div>
<svg class="a" style="left:0;top:0;width:1080px;height:575px" viewBox="0 0 1080 575"><path d="M23.5 414.16H403M1060.5 414.16H1066M23.5 423.82H1066M23.5 433.48H1066M23.5 443.14H1066M23.5 452.80H1066M23.5 462.46H1066M23.5 472.12H1066M23.5 481.78H1066M23.5 491.44H1066M23.5 501.10H1066M23.5 510.76H1066M23.5 520.42H1066M23.5 530.08H1066M23.5 539.74H1066M23.5 549.40H1066M23.5 559.06H1066M110 404.5V561M153.5 404.5V561M308.5 404.5V561M369.5 404.5V561M377 404.5V561M385 404.5V561M395 404.5V561M403 404.5V561M445 423.82V561M483.5 423.82V561M546.5 423.82V561M588 423.82V561M647.5 423.82V561M712 423.82V561M754.5 423.82V561M798.5 423.82V561M873.5 423.82V561M915.5 423.82V561M986 423.82V561M1060.5 404.5V561" stroke="#c4c4c4" stroke-width="0.8" fill="none"/>
<path d="M445 414.16V423.82M483.5 414.16V423.82M546.5 414.16V423.82M588 414.16V423.82M647.5 414.16V423.82M712 414.16V423.82M754.5 414.16V423.82M798.5 414.16V423.82M873.5 414.16V423.82M915.5 414.16V423.82M986 414.16V423.82M1060.5 414.16V423.82M403 414.16H1060.5" stroke="#223" stroke-width="1.1" fill="none"/>
<path d="M109.7 392V561M5 423.82H1066" stroke="#333" stroke-width="1.3" fill="none"/>
</svg>
<div class="a " style="left:5px;top:391.4px;width:1070.5px;height:0.9px;background:#777"></div>
<div class="a hd" style="left:5px;top:392px;width:18.5px;height:12.5px;"></div>
<div class="a hd" style="left:23.5px;top:392px;width:86.0px;height:12.5px;overflow:visible;"><span>A</span></div>
<div class="a hd" style="left:110px;top:392px;width:43.5px;height:12.5px;overflow:visible;"><span>H</span></div>
<div class="a hd" style="left:153.5px;top:392px;width:155.0px;height:12.5px;overflow:visible;"><span>I</span></div>
<div class="a hd" style="left:308.5px;top:392px;width:61.0px;height:12.5px;overflow:visible;"><span>J</span></div>
<div class="a hd" style="left:369.5px;top:392px;width:7.5px;height:12.5px;overflow:visible;"><span>K</span></div>
<div class="a hd" style="left:377px;top:392px;width:8px;height:12.5px;overflow:visible;"><span>L</span></div>
<div class="a hd" style="left:385px;top:392px;width:10px;height:12.5px;overflow:visible;"><span>M</span></div>
<div class="a hd" style="left:395px;top:392px;width:8px;height:12.5px;overflow:visible;"><span>N</span></div>
<div class="a hd" style="left:403px;top:392px;width:42px;height:12.5px;background:#b8bcd8;border:1px solid #345;line-height:13.4px;overflow:visible;"><span>O</span></div>
<div class="a hd" style="left:445px;top:392px;width:38.5px;height:12.5px;overflow:visible;"><span>P</span></div>
<div class="a hd" style="left:483.5px;top:392px;width:63.0px;height:12.5px;overflow:visible;"><span>Q</span></div>
<div class="a hd" style="left:546.5px;top:392px;width:41.5px;height:12.5px;overflow:visible;"><span>R</span></div>
<div class="a hd" style="left:588px;top:392px;width:59.5px;height:12.5px;overflow:visible;"><span>S</span></div>
<div class="a hd" style="left:647.5px;top:392px;width:64.5px;height:12.5px;overflow:visible;"><span>T</span></div>
<div class="a hd" style="left:712px;top:392px;width:42.5px;height:12.5px;overflow:visible;"><span>U</span></div>
<div class="a hd" style="left:754.5px;top:392px;width:44.0px;height:12.5px;overflow:visible;"><span>V</span></div>
<div class="a hd" style="left:798.5px;top:392px;width:75.0px;height:12.5px;overflow:visible;"><span>W</span></div>
<div class="a hd" style="left:873.5px;top:392px;width:42.0px;height:12.5px;overflow:visible;"><span>X</span></div>
<div class="a hd" style="left:915.5px;top:392px;width:70.5px;height:12.5px;overflow:visible;"><span>Y</span></div>
<div class="a hd" style="left:986px;top:392px;width:74.5px;height:12.5px;overflow:visible;"><span>Z</span></div>
<div class="a hd" style="left:1060.5px;top:392px;width:5.5px;height:12.5px;overflow:visible;"><span></span></div>
<div class="rh" style="left:5px;top:404.50px;width:18.5px;height:9.66px;">1</div>
<div class="rh" style="left:5px;top:414.16px;width:18.5px;height:9.66px;">2</div>
<div class="rh" style="left:5px;top:423.82px;width:18.5px;height:9.66px;background:#b8c4e0;border:1px solid #345;line-height:8px;">3</div>
<div class="rh" style="left:5px;top:433.48px;width:18.5px;height:9.66px;">4</div>
<div class="rh" style="left:5px;top:443.14px;width:18.5px;height:9.66px;">5</div>
<div class="rh" style="left:5px;top:452.80px;width:18.5px;height:9.66px;">6</div>
<div class="rh" style="left:5px;top:462.46px;width:18.5px;height:9.66px;">7</div>
<div class="rh" style="left:5px;top:472.12px;width:18.5px;height:9.66px;">8</div>
<div class="rh" style="left:5px;top:481.78px;width:18.5px;height:9.66px;">9</div>
<div class="rh" style="left:5px;top:491.44px;width:18.5px;height:9.66px;">10</div>
<div class="rh" style="left:5px;top:501.10px;width:18.5px;height:9.66px;">11</div>
<div class="rh" style="left:5px;top:510.76px;width:18.5px;height:9.66px;">12</div>
<div class="rh" style="left:5px;top:520.42px;width:18.5px;height:9.66px;">13</div>
<div class="rh" style="left:5px;top:530.08px;width:18.5px;height:9.66px;">14</div>
<div class="rh" style="left:5px;top:539.74px;width:18.5px;height:9.66px;">15</div>
<div class="rh" style="left:5px;top:549.40px;width:18.5px;height:9.66px;">16</div>
<div class="rh" style="left:5px;top:559.06px;width:18.5px;height:1.94px;">17</div>
<div class="c " style="left:24.50px;top:405.40px;width:90.32px;text-align:left;transform:scaleX(0.93);transform-origin:left center;padding-left:1.5px;font-size:6.75px">Replay 10.0X: ES-201303-CME</div>
<div class="c " style="left:24.50px;top:415.06px;width:90.32px;text-align:left;transform:scaleX(0.93);transform-origin:left center;">Date Time</div>
<div class="c " style="left:18.18px;top:424.72px;width:90.32px;text-align:right;transform:scaleX(0.93);transform-origin:right center;">2013/3/1 11:58:21</div>
<div class="c " style="left:18.18px;top:434.38px;width:90.32px;text-align:right;transform:scaleX(0.93);transform-origin:right center;">2013/3/1 11:55:35</div>
<div class="c " style="left:18.18px;top:444.04px;width:90.32px;text-align:right;transform:scaleX(0.93);transform-origin:right center;">2013/3/1 11:53:54</div>
<div class="c " style="left:18.18px;top:453.70px;width:90.32px;text-align:right;transform:scaleX(0.93);transform-origin:right center;">2013/3/1 11:52:02</div>
<div class="c " style="left:18.18px;top:463.36px;width:90.32px;text-align:right;transform:scaleX(0.93);transform-origin:right center;">2013/3/1 11:50:40</div>
<div class="c " style="left:18.18px;top:473.02px;width:90.32px;text-align:right;transform:scaleX(0.93);transform-origin:right center;">2013/3/1 11:49:51</div>
<div class="c " style="left:18.18px;top:482.68px;width:90.32px;text-align:right;transform:scaleX(0.93);transform-origin:right center;">2013/3/1 11:48:20</div>
<div class="c " style="left:18.18px;top:492.34px;width:90.32px;text-align:right;transform:scaleX(0.93);transform-origin:right center;">2013/3/1 11:47:24</div>
<div class="c " style="left:18.18px;top:502.00px;width:90.32px;text-align:right;transform:scaleX(0.93);transform-origin:right center;">2013/3/1 11:45:58</div>
<div class="c " style="left:18.18px;top:511.66px;width:90.32px;text-align:right;transform:scaleX(0.93);transform-origin:right center;">2013/3/1 11:44:58</div>
<div class="c " style="left:18.18px;top:521.32px;width:90.32px;text-align:right;transform:scaleX(0.93);transform-origin:right center;">2012/8/31 11:00:00</div>
<div class="c " style="left:18.18px;top:530.98px;width:90.32px;text-align:right;transform:scaleX(0.93);transform-origin:right center;">2012/8/31 10:30:00</div>
<div class="c " style="left:18.18px;top:540.64px;width:90.32px;text-align:right;transform:scaleX(0.93);transform-origin:right center;">2012/8/31 10:00:00</div>
<div class="c " style="left:18.18px;top:550.30px;width:90.32px;text-align:right;transform:scaleX(0.93);transform-origin:right center;">2012/8/31 9:30:00</div>
<div class="c " style="left:109.44px;top:405.40px;width:44.62px;text-align:center;transform:scaleX(0.93);transform-origin:center center;">TRUE</div>
<div class="c " style="left:109.44px;top:415.06px;width:44.62px;text-align:center;transform:scaleX(0.93);transform-origin:center center;">FALSE</div>
<div class="c " style="left:109.44px;top:424.72px;width:44.62px;text-align:center;transform:scaleX(0.93);transform-origin:center center;">FALSE</div>
<div class="c " style="left:109.44px;top:434.38px;width:44.62px;text-align:center;transform:scaleX(0.93);transform-origin:center center;">FALSE</div>
<div class="c " style="left:109.44px;top:444.04px;width:44.62px;text-align:center;transform:scaleX(0.93);transform-origin:center center;">FALSE</div>
<div class="c " style="left:109.44px;top:453.70px;width:44.62px;text-align:center;transform:scaleX(0.93);transform-origin:center center;">FALSE</div>
<div class="c " style="left:107.88px;top:473.02px;width:44.62px;text-align:right;transform:scaleX(0.93);transform-origin:right center;">2</div>
<div class="c " style="left:107.88px;top:492.34px;width:44.62px;text-align:right;transform:scaleX(0.93);transform-origin:right center;">125</div>
<div class="c " style="left:107.88px;top:511.66px;width:44.62px;text-align:right;transform:scaleX(0.93);transform-origin:right center;">100</div>
<div class="c " style="left:107.88px;top:530.98px;width:44.62px;text-align:right;transform:scaleX(0.93);transform-origin:right center;">125</div>
<div class="c bl" style="left:142.98px;top:405.40px;width:164.52px;text-align:right;transform:scaleX(0.93);transform-origin:right center;white-space:pre">Include Closed Daily P/L?  y/n -&gt;</div>
<div class="c bl" style="left:142.98px;top:415.06px;width:164.52px;text-align:right;transform:scaleX(0.93);transform-origin:right center;">RT Comm -&gt;</div>
<div class="c bl" style="left:307.28px;top:405.40px;width:63.44px;text-align:center;transform:scaleX(0.93);transform-origin:center center;">y</div>
<div class="c bl" style="left:307.28px;top:415.06px;width:63.44px;text-align:center;transform:scaleX(0.93);transform-origin:center center;">3.65</div>
<div class="c " style="left:154.50px;top:424.72px;width:164.52px;text-align:left;transform:scaleX(0.93);transform-origin:left center;">Working Orders Quantity (read-only):</div>
<div class="c " style="left:305.06px;top:424.72px;width:63.44px;text-align:right;transform:scaleX(0.93);transform-origin:right center;">0</div>
<div class="c " style="left:154.50px;top:434.38px;width:164.52px;text-align:left;transform:scaleX(0.93);transform-origin:left center;">Position with Working Orders Quantity (read-only):</div>
<div class="c " style="left:305.06px;top:434.38px;width:63.44px;text-align:right;transform:scaleX(0.93);transform-origin:right center;">2</div>
<div class="c " style="left:154.50px;top:444.04px;width:164.52px;text-align:left;transform:scaleX(0.93);transform-origin:left center;">Position Quantity (read-only):</div>
<div class="c " style="left:305.06px;top:444.04px;width:63.44px;text-align:right;transform:scaleX(0.93);transform-origin:right center;">2</div>
<div class="c " style="left:154.50px;top:453.70px;width:164.52px;text-align:left;transform:scaleX(0.93);transform-origin:left center;">Position Quantity with Working Exit Orders (read-only):</div>
<div class="c " style="left:305.06px;top:453.70px;width:63.44px;text-align:right;transform:scaleX(0.93);transform-origin:right center;">2</div>
<div class="c " style="left:154.50px;top:463.36px;width:164.52px;text-align:left;transform:scaleX(0.93);transform-origin:left center;">Prior Position Quantity (read-only):</div>
<div class="c " style="left:305.06px;top:463.36px;width:63.44px;text-align:right;transform:scaleX(0.93);transform-origin:right center;">0</div>
<div class="c " style="left:154.50px;top:473.02px;width:164.52px;text-align:left;transform:scaleX(0.93);transform-origin:left center;">Position Quantity (read-only):</div>
<div class="c " style="left:305.06px;top:473.02px;width:63.44px;text-align:right;transform:scaleX(0.93);transform-origin:right center;">2</div>
<div class="c " style="left:154.50px;top:482.68px;width:164.52px;text-align:left;transform:scaleX(0.93);transform-origin:left center;">Position Average Price (read-only):</div>
<div class="c " style="left:305.06px;top:482.68px;width:63.44px;text-align:right;transform:scaleX(0.93);transform-origin:right center;">1510.25</div>
<div class="c " style="left:154.50px;top:492.34px;width:164.52px;text-align:left;transform:scaleX(0.93);transform-origin:left center;">Open Profit/Loss (read-only):</div>
<div class="c " style="left:305.06px;top:492.34px;width:63.44px;text-align:right;transform:scaleX(0.93);transform-origin:right center;">125.00</div>
<div class="c " style="left:154.50px;top:502.00px;width:164.52px;text-align:left;transform:scaleX(0.93);transform-origin:left center;">Cumulative Closed Profit/Loss (read-only):</div>
<div class="c " style="left:305.06px;top:502.00px;width:63.44px;text-align:right;transform:scaleX(0.93);transform-origin:right center;">0</div>
<div class="c " style="left:154.50px;top:511.66px;width:164.52px;text-align:left;transform:scaleX(0.93);transform-origin:left center;">Bid:</div>
<div class="c " style="left:305.06px;top:511.66px;width:63.44px;text-align:right;transform:scaleX(0.93);transform-origin:right center;">1511.25</div>
<div class="c " style="left:154.50px;top:521.32px;width:164.52px;text-align:left;transform:scaleX(0.93);transform-origin:left center;">Bid Size:</div>
<div class="c " style="left:305.06px;top:521.32px;width:63.44px;text-align:right;transform:scaleX(0.93);transform-origin:right center;">1</div>
<div class="c " style="left:154.50px;top:530.98px;width:164.52px;text-align:left;transform:scaleX(0.93);transform-origin:left center;">Ask:</div>
<div class="c " style="left:305.06px;top:530.98px;width:63.44px;text-align:right;transform:scaleX(0.93);transform-origin:right center;">1511.5</div>
<div class="c " style="left:154.50px;top:540.64px;width:164.52px;text-align:left;transform:scaleX(0.93);transform-origin:left center;">Ask Size:</div>
<div class="c " style="left:305.06px;top:540.64px;width:63.44px;text-align:right;transform:scaleX(0.93);transform-origin:right center;">1</div>
<div class="c " style="left:154.50px;top:550.30px;width:164.52px;text-align:left;transform:scaleX(0.93);transform-origin:left center;">Daily Open:</div>
<div class="c " style="left:305.06px;top:550.30px;width:63.44px;text-align:right;transform:scaleX(0.93);transform-origin:right center;">0</div>
<div class="c " style="left:369.22px;top:415.06px;width:8.06px;text-align:center;transform:scaleX(0.93);transform-origin:center center;font-size:6.8px">K</div>
<div class="c " style="left:376.70px;top:415.06px;width:8.60px;text-align:center;transform:scaleX(0.93);transform-origin:center center;font-size:6.8px">L</div>
<div class="c " style="left:384.62px;top:415.06px;width:10.75px;text-align:center;transform:scaleX(0.93);transform-origin:center center;font-size:6.8px">M</div>
<div class="c " style="left:394.70px;top:415.06px;width:8.60px;text-align:center;transform:scaleX(0.93);transform-origin:center center;font-size:6.8px">N</div>
<div class="c " style="left:392.45px;top:405.40px;width:330.11px;text-align:center;transform:scaleX(0.93);transform-origin:center center;">Based on Last Price</div>
<div class="c " style="left:699.96px;top:405.40px;width:372.58px;text-align:center;transform:scaleX(0.93);transform-origin:center center;">Based on Bid Price if Long or Ask Price if Short</div>
<div class="c " style="left:402.49px;top:415.06px;width:43.01px;text-align:center;transform:scaleX(0.93);transform-origin:center center;">P/L Curr</div>
<div class="c " style="left:402.49px;top:424.72px;width:43.01px;text-align:center;transform:scaleX(0.93);transform-origin:center center;">125</div>
<div class="c " style="left:402.49px;top:434.38px;width:43.01px;text-align:center;transform:scaleX(0.93);transform-origin:center center;">125</div>
<div class="c " style="left:402.49px;top:444.04px;width:43.01px;text-align:center;transform:scaleX(0.93);transform-origin:center center;">125</div>
<div class="c " style="left:402.49px;top:453.70px;width:43.01px;text-align:center;transform:scaleX(0.93);transform-origin:center center;">125</div>
<div class="c " style="left:402.49px;top:463.36px;width:43.01px;text-align:center;transform:scaleX(0.93);transform-origin:center center;">125</div>
<div class="c " style="left:402.49px;top:473.02px;width:43.01px;text-align:center;transform:scaleX(0.93);transform-origin:center center;">125</div>
<div class="c " style="left:402.49px;top:482.68px;width:43.01px;text-align:center;transform:scaleX(0.93);transform-origin:center center;">125</div>
<div class="c " style="left:402.49px;top:492.34px;width:43.01px;text-align:center;transform:scaleX(0.93);transform-origin:center center;">125</div>
<div class="c " style="left:402.49px;top:502.00px;width:43.01px;text-align:center;transform:scaleX(0.93);transform-origin:center center;">125</div>
<div class="c " style="left:402.49px;top:511.66px;width:43.01px;text-align:center;transform:scaleX(0.93);transform-origin:center center;">125</div>
<div class="c " style="left:444.63px;top:415.06px;width:39.25px;text-align:center;transform:scaleX(0.93);transform-origin:center center;">P/L Points</div>
<div class="c " style="left:444.63px;top:424.72px;width:39.25px;text-align:center;transform:scaleX(0.93);transform-origin:center center;">2.5</div>
<div class="c " style="left:444.63px;top:434.38px;width:39.25px;text-align:center;transform:scaleX(0.93);transform-origin:center center;">2.5</div>
<div class="c " style="left:444.63px;top:444.04px;width:39.25px;text-align:center;transform:scaleX(0.93);transform-origin:center center;">2.5</div>
<div class="c " style="left:444.63px;top:453.70px;width:39.25px;text-align:center;transform:scaleX(0.93);transform-origin:center center;">2.5</div>
<div class="c " style="left:444.63px;top:463.36px;width:39.25px;text-align:center;transform:scaleX(0.93);transform-origin:center center;">2.5</div>
<div class="c " style="left:444.63px;top:473.02px;width:39.25px;text-align:center;transform:scaleX(0.93);transform-origin:center center;">2.5</div>
<div class="c " style="left:444.63px;top:482.68px;width:39.25px;text-align:center;transform:scaleX(0.93);transform-origin:center center;">2.5</div>
<div class="c " style="left:444.63px;top:492.34px;width:39.25px;text-align:center;transform:scaleX(0.93);transform-origin:center center;">2.5</div>
<div class="c " style="left:444.63px;top:502.00px;width:39.25px;text-align:center;transform:scaleX(0.93);transform-origin:center center;">2.5</div>
<div class="c " style="left:444.63px;top:511.66px;width:39.25px;text-align:center;transform:scaleX(0.93);transform-origin:center center;">2.5</div>
<div class="c " style="left:482.20px;top:415.06px;width:65.59px;text-align:center;transform:scaleX(0.93);transform-origin:center center;">P/L Points w/o Quan</div>
<div class="c " style="left:482.20px;top:424.72px;width:65.59px;text-align:center;transform:scaleX(0.93);transform-origin:center center;">1.25</div>
<div class="c " style="left:482.20px;top:434.38px;width:65.59px;text-align:center;transform:scaleX(0.93);transform-origin:center center;">1.25</div>
<div class="c " style="left:482.20px;top:444.04px;width:65.59px;text-align:center;transform:scaleX(0.93);transform-origin:center center;">1.25</div>
<div class="c " style="left:482.20px;top:453.70px;width:65.59px;text-align:center;transform:scaleX(0.93);transform-origin:center center;">1.25</div>
<div class="c " style="left:482.20px;top:463.36px;width:65.59px;text-align:center;transform:scaleX(0.93);transform-origin:center center;">1.25</div>
<div class="c " style="left:482.20px;top:473.02px;width:65.59px;text-align:center;transform:scaleX(0.93);transform-origin:center center;">1.25</div>
<div class="c " style="left:482.20px;top:482.68px;width:65.59px;text-align:center;transform:scaleX(0.93);transform-origin:center center;">1.25</div>
<div class="c " style="left:482.20px;top:492.34px;width:65.59px;text-align:center;transform:scaleX(0.93);transform-origin:center center;">1.25</div>
<div class="c " style="left:482.20px;top:502.00px;width:65.59px;text-align:center;transform:scaleX(0.93);transform-origin:center center;">1.25</div>
<div class="c " style="left:482.20px;top:511.66px;width:65.59px;text-align:center;transform:scaleX(0.93);transform-origin:center center;">1.25</div>
<div class="c " style="left:546.01px;top:415.06px;width:42.47px;text-align:center;transform:scaleX(0.93);transform-origin:center center;">P/L Ticks</div>
<div class="c " style="left:546.01px;top:424.72px;width:42.47px;text-align:center;transform:scaleX(0.93);transform-origin:center center;">10</div>
<div class="c " style="left:546.01px;top:434.38px;width:42.47px;text-align:center;transform:scaleX(0.93);transform-origin:center center;">10</div>
<div class="c " style="left:546.01px;top:444.04px;width:42.47px;text-align:center;transform:scaleX(0.93);transform-origin:center center;">10</div>
<div class="c " style="left:546.01px;top:453.70px;width:42.47px;text-align:center;transform:scaleX(0.93);transform-origin:center center;">10</div>
<div class="c " style="left:546.01px;top:463.36px;width:42.47px;text-align:center;transform:scaleX(0.93);transform-origin:center center;">10</div>
<div class="c " style="left:546.01px;top:473.02px;width:42.47px;text-align:center;transform:scaleX(0.93);transform-origin:center center;">10</div>
<div class="c " style="left:546.01px;top:482.68px;width:42.47px;text-align:center;transform:scaleX(0.93);transform-origin:center center;">10</div>
<div class="c " style="left:546.01px;top:492.34px;width:42.47px;text-align:center;transform:scaleX(0.93);transform-origin:center center;">10</div>
<div class="c " style="left:546.01px;top:502.00px;width:42.47px;text-align:center;transform:scaleX(0.93);transform-origin:center center;">10</div>
<div class="c " style="left:546.01px;top:511.66px;width:42.47px;text-align:center;transform:scaleX(0.93);transform-origin:center center;">10</div>
<div class="c " style="left:586.84px;top:415.06px;width:61.83px;text-align:center;transform:scaleX(0.93);transform-origin:center center;">P/L Ticks w/o Quan</div>
<div class="c " style="left:586.84px;top:424.72px;width:61.83px;text-align:center;transform:scaleX(0.93);transform-origin:center center;">5</div>
<div class="c " style="left:586.84px;top:434.38px;width:61.83px;text-align:center;transform:scaleX(0.93);transform-origin:center center;">5</div>
<div class="c " style="left:586.84px;top:444.04px;width:61.83px;text-align:center;transform:scaleX(0.93);transform-origin:center center;">5</div>
<div class="c " style="left:586.84px;top:453.70px;width:61.83px;text-align:center;transform:scaleX(0.93);transform-origin:center center;">5</div>
<div class="c " style="left:586.84px;top:463.36px;width:61.83px;text-align:center;transform:scaleX(0.93);transform-origin:center center;">5</div>
<div class="c " style="left:586.84px;top:473.02px;width:61.83px;text-align:center;transform:scaleX(0.93);transform-origin:center center;">5</div>
<div class="c " style="left:586.84px;top:482.68px;width:61.83px;text-align:center;transform:scaleX(0.93);transform-origin:center center;">5</div>
<div class="c " style="left:586.84px;top:492.34px;width:61.83px;text-align:center;transform:scaleX(0.93);transform-origin:center center;">5</div>
<div class="c " style="left:586.84px;top:502.00px;width:61.83px;text-align:center;transform:scaleX(0.93);transform-origin:center center;">5</div>
<div class="c " style="left:586.84px;top:511.66px;width:61.83px;text-align:center;transform:scaleX(0.93);transform-origin:center center;">5</div>
<div class="c " style="left:646.15px;top:415.06px;width:67.20px;text-align:center;transform:scaleX(0.93);transform-origin:center center;">P/L Curr after Comm</div>
<div class="c " style="left:646.15px;top:424.72px;width:67.20px;text-align:center;transform:scaleX(0.93);transform-origin:center center;">117.7</div>
<div class="c " style="left:646.15px;top:434.38px;width:67.20px;text-align:center;transform:scaleX(0.93);transform-origin:center center;">117.7</div>
<div class="c " style="left:646.15px;top:444.04px;width:67.20px;text-align:center;transform:scaleX(0.93);transform-origin:center center;">117.7</div>
<div class="c " style="left:646.15px;top:453.70px;width:67.20px;text-align:center;transform:scaleX(0.93);transform-origin:center center;">117.7</div>
<div class="c " style="left:646.15px;top:463.36px;width:67.20px;text-align:center;transform:scaleX(0.93);transform-origin:center center;">117.7</div>
<div class="c " style="left:646.15px;top:473.02px;width:67.20px;text-align:center;transform:scaleX(0.93);transform-origin:center center;">117.7</div>
<div class="c " style="left:646.15px;top:482.68px;width:67.20px;text-align:center;transform:scaleX(0.93);transform-origin:center center;">117.7</div>
<div class="c " style="left:646.15px;top:492.34px;width:67.20px;text-align:center;transform:scaleX(0.93);transform-origin:center center;">117.7</div>
<div class="c " style="left:646.15px;top:502.00px;width:67.20px;text-align:center;transform:scaleX(0.93);transform-origin:center center;">117.7</div>
<div class="c " style="left:646.15px;top:511.66px;width:67.20px;text-align:center;transform:scaleX(0.93);transform-origin:center center;">117.7</div>
<div class="c " style="left:711.48px;top:415.06px;width:43.55px;text-align:center;transform:scaleX(0.93);transform-origin:center center;">P/L Curr b/a</div>
<div class="c " style="left:711.48px;top:424.72px;width:43.55px;text-align:center;transform:scaleX(0.93);transform-origin:center center;">100</div>
<div class="c " style="left:711.48px;top:434.38px;width:43.55px;text-align:center;transform:scaleX(0.93);transform-origin:center center;">100</div>
<div class="c " style="left:711.48px;top:444.04px;width:43.55px;text-align:center;transform:scaleX(0.93);transform-origin:center center;">100</div>
<div class="c " style="left:711.48px;top:453.70px;width:43.55px;text-align:center;transform:scaleX(0.93);transform-origin:center center;">100</div>
<div class="c " style="left:711.48px;top:463.36px;width:43.55px;text-align:center;transform:scaleX(0.93);transform-origin:center center;">100</div>
<div class="c " style="left:711.48px;top:473.02px;width:43.55px;text-align:center;transform:scaleX(0.93);transform-origin:center center;">100</div>
<div class="c " style="left:711.48px;top:482.68px;width:43.55px;text-align:center;transform:scaleX(0.93);transform-origin:center center;">100</div>
<div class="c " style="left:711.48px;top:492.34px;width:43.55px;text-align:center;transform:scaleX(0.93);transform-origin:center center;">100</div>
<div class="c " style="left:711.48px;top:502.00px;width:43.55px;text-align:center;transform:scaleX(0.93);transform-origin:center center;">100</div>
<div class="c " style="left:711.48px;top:511.66px;width:43.55px;text-align:center;transform:scaleX(0.93);transform-origin:center center;">100</div>
<div class="c " style="left:753.92px;top:415.06px;width:45.16px;text-align:center;transform:scaleX(0.93);transform-origin:center center;">P/L Points b/a</div>
<div class="c " style="left:753.92px;top:424.72px;width:45.16px;text-align:center;transform:scaleX(0.93);transform-origin:center center;">2</div>
<div class="c " style="left:753.92px;top:434.38px;width:45.16px;text-align:center;transform:scaleX(0.93);transform-origin:center center;">2</div>
<div class="c " style="left:753.92px;top:444.04px;width:45.16px;text-align:center;transform:scaleX(0.93);transform-origin:center center;">2</div>
<div class="c " style="left:753.92px;top:453.70px;width:45.16px;text-align:center;transform:scaleX(0.93);transform-origin:center center;">2</div>
<div class="c " style="left:753.92px;top:463.36px;width:45.16px;text-align:center;transform:scaleX(0.93);transform-origin:center center;">2</div>
<div class="c " style="left:753.92px;top:473.02px;width:45.16px;text-align:center;transform:scaleX(0.93);transform-origin:center center;">2</div>
<div class="c " style="left:753.92px;top:482.68px;width:45.16px;text-align:center;transform:scaleX(0.93);transform-origin:center center;">2</div>
<div class="c " style="left:753.92px;top:492.34px;width:45.16px;text-align:center;transform:scaleX(0.93);transform-origin:center center;">2</div>
<div class="c " style="left:753.92px;top:502.00px;width:45.16px;text-align:center;transform:scaleX(0.93);transform-origin:center center;">2</div>
<div class="c " style="left:753.92px;top:511.66px;width:45.16px;text-align:center;transform:scaleX(0.93);transform-origin:center center;">2</div>
<div class="c " style="left:796.75px;top:415.06px;width:78.49px;text-align:center;transform:scaleX(0.93);transform-origin:center center;">P/L Points w/o Quan b/a</div>
<div class="c " style="left:796.75px;top:424.72px;width:78.49px;text-align:center;transform:scaleX(0.93);transform-origin:center center;">1</div>
<div class="c " style="left:796.75px;top:434.38px;width:78.49px;text-align:center;transform:scaleX(0.93);transform-origin:center center;">1</div>
<div class="c " style="left:796.75px;top:444.04px;width:78.49px;text-align:center;transform:scaleX(0.93);transform-origin:center center;">1</div>
<div class="c " style="left:796.75px;top:453.70px;width:78.49px;text-align:center;transform:scaleX(0.93);transform-origin:center center;">1</div>
<div class="c " style="left:796.75px;top:463.36px;width:78.49px;text-align:center;transform:scaleX(0.93);transform-origin:center center;">1</div>
<div class="c " style="left:796.75px;top:473.02px;width:78.49px;text-align:center;transform:scaleX(0.93);transform-origin:center center;">1</div>
<div class="c " style="left:796.75px;top:482.68px;width:78.49px;text-align:center;transform:scaleX(0.93);transform-origin:center center;">1</div>
<div class="c " style="left:796.75px;top:492.34px;width:78.49px;text-align:center;transform:scaleX(0.93);transform-origin:center center;">1</div>
<div class="c " style="left:796.75px;top:502.00px;width:78.49px;text-align:center;transform:scaleX(0.93);transform-origin:center center;">1</div>
<div class="c " style="left:796.75px;top:511.66px;width:78.49px;text-align:center;transform:scaleX(0.93);transform-origin:center center;">1</div>
<div class="c " style="left:872.99px;top:415.06px;width:43.01px;text-align:center;transform:scaleX(0.93);transform-origin:center center;">P/L Ticks b/a</div>
<div class="c " style="left:872.99px;top:424.72px;width:43.01px;text-align:center;transform:scaleX(0.93);transform-origin:center center;">8</div>
<div class="c " style="left:872.99px;top:434.38px;width:43.01px;text-align:center;transform:scaleX(0.93);transform-origin:center center;">8</div>
<div class="c " style="left:872.99px;top:444.04px;width:43.01px;text-align:center;transform:scaleX(0.93);transform-origin:center center;">8</div>
<div class="c " style="left:872.99px;top:453.70px;width:43.01px;text-align:center;transform:scaleX(0.93);transform-origin:center center;">8</div>
<div class="c " style="left:872.99px;top:463.36px;width:43.01px;text-align:center;transform:scaleX(0.93);transform-origin:center center;">8</div>
<div class="c " style="left:872.99px;top:473.02px;width:43.01px;text-align:center;transform:scaleX(0.93);transform-origin:center center;">8</div>
<div class="c " style="left:872.99px;top:482.68px;width:43.01px;text-align:center;transform:scaleX(0.93);transform-origin:center center;">8</div>
<div class="c " style="left:872.99px;top:492.34px;width:43.01px;text-align:center;transform:scaleX(0.93);transform-origin:center center;">8</div>
<div class="c " style="left:872.99px;top:502.00px;width:43.01px;text-align:center;transform:scaleX(0.93);transform-origin:center center;">8</div>
<div class="c " style="left:872.99px;top:511.66px;width:43.01px;text-align:center;transform:scaleX(0.93);transform-origin:center center;">8</div>
<div class="c " style="left:913.92px;top:415.06px;width:73.66px;text-align:center;transform:scaleX(0.93);transform-origin:center center;">P/L Ticks w/o Quan b/a</div>
<div class="c " style="left:913.92px;top:424.72px;width:73.66px;text-align:center;transform:scaleX(0.93);transform-origin:center center;">4</div>
<div class="c " style="left:913.92px;top:434.38px;width:73.66px;text-align:center;transform:scaleX(0.93);transform-origin:center center;">4</div>
<div class="c " style="left:913.92px;top:444.04px;width:73.66px;text-align:center;transform:scaleX(0.93);transform-origin:center center;">4</div>
<div class="c " style="left:913.92px;top:453.70px;width:73.66px;text-align:center;transform:scaleX(0.93);transform-origin:center center;">4</div>
<div class="c " style="left:913.92px;top:463.36px;width:73.66px;text-align:center;transform:scaleX(0.93);transform-origin:center center;">4</div>
<div class="c " style="left:913.92px;top:473.02px;width:73.66px;text-align:center;transform:scaleX(0.93);transform-origin:center center;">4</div>
<div class="c " style="left:913.92px;top:482.68px;width:73.66px;text-align:center;transform:scaleX(0.93);transform-origin:center center;">4</div>
<div class="c " style="left:913.92px;top:492.34px;width:73.66px;text-align:center;transform:scaleX(0.93);transform-origin:center center;">4</div>
<div class="c " style="left:913.92px;top:502.00px;width:73.66px;text-align:center;transform:scaleX(0.93);transform-origin:center center;">4</div>
<div class="c " style="left:913.92px;top:511.66px;width:73.66px;text-align:center;transform:scaleX(0.93);transform-origin:center center;">4</div>
<div class="c " style="left:984.27px;top:415.06px;width:77.96px;text-align:center;transform:scaleX(0.93);transform-origin:center center;">P/L Curr after Comm b/a</div>
<div class="c " style="left:984.27px;top:424.72px;width:77.96px;text-align:center;transform:scaleX(0.93);transform-origin:center center;">92.7</div>
<div class="c " style="left:984.27px;top:434.38px;width:77.96px;text-align:center;transform:scaleX(0.93);transform-origin:center center;">92.7</div>
<div class="c " style="left:984.27px;top:444.04px;width:77.96px;text-align:center;transform:scaleX(0.93);transform-origin:center center;">92.7</div>
<div class="c " style="left:984.27px;top:453.70px;width:77.96px;text-align:center;transform:scaleX(0.93);transform-origin:center center;">92.7</div>
<div class="c " style="left:984.27px;top:463.36px;width:77.96px;text-align:center;transform:scaleX(0.93);transform-origin:center center;">92.7</div>
<div class="c " style="left:984.27px;top:473.02px;width:77.96px;text-align:center;transform:scaleX(0.93);transform-origin:center center;">92.7</div>
<div class="c " style="left:984.27px;top:482.68px;width:77.96px;text-align:center;transform:scaleX(0.93);transform-origin:center center;">92.7</div>
<div class="c " style="left:984.27px;top:492.34px;width:77.96px;text-align:center;transform:scaleX(0.93);transform-origin:center center;">92.7</div>
<div class="c " style="left:984.27px;top:502.00px;width:77.96px;text-align:center;transform:scaleX(0.93);transform-origin:center center;">92.7</div>
<div class="c " style="left:984.27px;top:511.66px;width:77.96px;text-align:center;transform:scaleX(0.93);transform-origin:center center;">92.7</div>
<div class="c " style="left:1061.50px;top:405.40px;width:3.76px;text-align:left;transform:scaleX(0.93);transform-origin:left center;">T</div>
<div class="c " style="left:1061.50px;top:415.06px;width:3.76px;text-align:left;transform:scaleX(0.93);transform-origin:left center;">T</div>
<div class="a " style="left:402.6px;top:423.52px;width:43.4px;height:10.66px;border:1.3px solid #4a4a4a;border-right:2px solid #777"></div>
<div class="a " style="left:444px;top:432.48px;width:2.8px;height:2.6px;background:#333"></div>
<div class="a " style="left:1066px;top:392px;width:9.5px;height:169px;background:#e9e8e2"></div>
<div class="a rais" style="left:1066px;top:392px;width:9.5px;height:9.5px;background:#d4d0c8"></div>
<svg class="a" style="left:1068.3px;top:395.3px;width:5px;height:3px" viewBox="0 0 5 3"><path d="M0 3H5L2.5 0Z" fill="#000"/></svg>
<div class="a rais" style="left:1066px;top:401.5px;width:9.5px;height:3.5px;background:#d4d0c8"></div>
<div class="a rais" style="left:1066px;top:551.5px;width:9.5px;height:9.5px;background:#d4d0c8"></div>
<svg class="a" style="left:1068.3px;top:555px;width:5px;height:3px" viewBox="0 0 5 3"><path d="M0 0H5L2.5 3Z" fill="#000"/></svg>
<div class="a " style="left:5px;top:561px;width:1070.5px;height:11px;background:#d4d0c8;border-top:1px solid #777"></div>
<svg class="a" style="left:0;top:560px;width:200px;height:13px" viewBox="0 0 200 13"><path d="M45.5 1L49 11.5H76L79.5 1Z" fill="#fff" stroke="#444" stroke-width="0.8"/><path d="M11 4.5V9.5L8.5 7ZM8 4.5V9.5" fill="#222" stroke="#222" stroke-width="0.6"/><path d="M21.5 4.5V9.5L19 7Z" fill="#222"/><path d="M29 4.5V9.5L31.5 7Z" fill="#222"/><path d="M38.5 4.5V9.5L41 7ZM41.6 4.5V9.5" fill="#222" stroke="#222" stroke-width="0.6"/></svg>
<div class="t " style="left:51.5px;top:563.4px;font-size:6.9px;color:#222">Sheet1</div>
<div class="a " style="left:640px;top:561.5px;width:426px;height:10.0px;background:#e9e8e2"></div>
<div class="a rais" style="left:640px;top:561.8px;width:10px;height:9.5px;background:#d4d0c8"></div>
<svg class="a" style="left:643.4px;top:564px;width:3.2px;height:5px" viewBox="0 0 3 5"><path d="M3 0V5L0 2.5Z" fill="#000"/></svg>
<div class="a rais" style="left:701px;top:561.8px;width:197.6px;height:9.5px;background:#d4d0c8"></div>
<div class="a rais" style="left:1056.5px;top:561.8px;width:9.5px;height:9.5px;background:#d4d0c8"></div>
<svg class="a" style="left:1060px;top:564px;width:3.2px;height:5px" viewBox="0 0 3 5"><path d="M0 0V5L3 2.5Z" fill="#000"/></svg>
<div class="a " style="left:1066px;top:561.5px;width:9.5px;height:10.0px;background:#d4d0c8"></div>
<div class="a " style="left:1077.5px;top:358px;width:1.0px;height:217px;background:#777"></div>
<div class="a " style="left:0px;top:573px;width:1080px;height:1px;background:#777"></div>
</body></html>
